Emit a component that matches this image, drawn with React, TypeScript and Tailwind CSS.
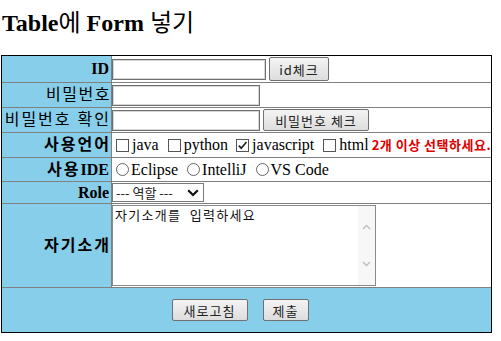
import type { ReactNode } from "react";

const LABEL =
  "bg-[#87ceeb] border-r border-b border-[#808080] flex items-center justify-end pr-0 whitespace-nowrap";
const CELL = "border-b border-[#808080] flex items-center bg-white whitespace-nowrap";
const KO = "font-['Noto_Sans_CJK_KR',sans-serif]";

function Btn({ className, children }: { className: string; children: ReactNode }) {
  return (
    <button
      type="button"
      className={`${KO} ${className} shrink-0 text-[13px] leading-none text-[#222] border border-[#707070] rounded-[2px] bg-linear-to-b from-[#f4f4f4] to-[#dddddd] tracking-[1px]`}
    >
      {children}
    </button>
  );
}

function TextBox({ className }: { className: string }) {
  return (
    <span
      className={`${className} shrink-0 h-[21px] bg-white border border-[#6f6f6f] shadow-[inset_0_0_0_1px_#d6d6d6]`}
    />
  );
}

function Box({ checked }: { checked?: boolean }) {
  return (
    <span className="w-[13px] h-[13px] shrink-0 border border-[#555] bg-white mr-[3px] flex items-center justify-center">
      {checked && (
        <svg width="11" height="11" viewBox="0 0 11 11">
          <path d="M1.8 5.6 L4.3 8.2 L9.4 2" fill="none" stroke="#222" strokeWidth="1.7" />
        </svg>
      )}
    </span>
  );
}

function Radio() {
  return <span className="w-[13px] h-[13px] shrink-0 rounded-full border border-[#666] bg-white mr-[2px]" />;
}

export default function App() {
  return (
    <div className="min-h-screen bg-white text-black text-[16px] font-['Liberation_Serif','Noto_Sans_CJK_KR',serif] pt-[7px] pl-[1px]">
      <h2 className="h-[28px] pl-[1px] text-[24px] leading-[28px] font-bold whitespace-nowrap">
        Table<span className={`${KO} font-normal`}>에</span> Form{" "}
        <span className={`${KO} font-normal`}>넣기</span>
      </h2>

      <div className="mt-[20px] w-[491px] border border-black grid grid-cols-[110px_379px] grid-rows-[27px_25px_25px_25px_24px_22px_84px_44px]">
        <div className={`${LABEL} font-bold pr-[2px]`}>ID</div>
        <div className={CELL}>
          <TextBox className="w-[154px]" />
          <Btn className="ml-[3px] w-[60px] h-[24px]">id체크</Btn>
        </div>

        <div className={`${LABEL} tracking-[1.5px]`}>비밀번호</div>
        <div className={CELL}>
          <TextBox className="w-[148px]" />
        </div>

        <div className={`${LABEL} tracking-[2px]`}>비밀번호 확인</div>
        <div className={CELL}>
          <TextBox className="w-[148px]" />
          <Btn className="ml-[3px] w-[106px] h-[22px]">비밀번호 체크</Btn>
        </div>

        <div className={`${LABEL} font-bold tracking-[2px]`}>사용언어</div>
        <div className={`${CELL} pl-[4px]`}>
          <Box />
          <span>java</span>
          <span className="ml-[9px] flex items-center">
            <Box />
            python
          </span>
          <span className="ml-[8px] flex items-center">
            <Box checked />
            javascript
          </span>
          <span className="ml-[9px] flex items-center">
            <Box />
            html
          </span>
          <span className={`${KO} ml-[3px] text-[13px] tracking-[0.5px] font-bold text-[#e00000]`}>
            2개 이상 선택하세요.
          </span>
        </div>

        <div className={`${LABEL} font-bold pr-[2px]`}>
          <span className="tracking-[2px]">사용</span>IDE
        </div>
        <div className={`${CELL} pl-[4px]`}>
          <Radio />
          <span>Eclipse</span>
          <span className="ml-[9px] flex items-center">
            <Radio />
            IntelliJ
          </span>
          <span className="ml-[9px] flex items-center">
            <Radio />
            VS Code
          </span>
        </div>

        <div className={`${LABEL} font-bold pr-[2px]`}>Role</div>
        <div className={CELL}>
          <span
            className={`${KO} w-[92px] h-[19px] border border-[#7a7a7a] bg-white flex items-center justify-between pl-[3px] pr-[4px] text-[13px] leading-none text-[#222]`}
          >
            --- 역할 ---
            <svg width="12" height="8" viewBox="0 0 12 8">
              <path d="M1.2 1.2 L6 6 L10.8 1.2" fill="none" stroke="#111" strokeWidth="2.2" />
            </svg>
          </span>
        </div>

        <div className={`${LABEL} font-bold tracking-[2px]`}>자기소개</div>
        <div className={CELL}>
          <div className="w-[264px] h-[81px] border border-[#8a8a8a] bg-white flex">
            <div
              className={`${KO} flex-1 pl-[2px] pt-[1px] text-[13px] leading-[16px] tracking-[1.3px] text-[#111] whitespace-pre`}
            >
              자기소개를  입력하세요
            </div>
            <div className="w-[17px] bg-[#f7f7f7] flex flex-col items-center justify-between py-[18px]">
              <svg width="9" height="6" viewBox="0 0 9 6">
                <path d="M1 5 L4.5 1.5 L8 5" fill="none" stroke="#bdbdbd" strokeWidth="1.4" />
              </svg>
              <svg width="9" height="6" viewBox="0 0 9 6">
                <path d="M1 1 L4.5 4.5 L8 1" fill="none" stroke="#bdbdbd" strokeWidth="1.4" />
              </svg>
            </div>
          </div>
        </div>

        <div className="col-span-2 bg-[#87ceeb] flex items-center justify-center gap-[15px] pr-[13px]">
          <Btn className="w-[76px] h-[22px]">새로고침</Btn>
          <Btn className="w-[46px] h-[22px]">제출</Btn>
        </div>
      </div>
    </div>
  );
}
